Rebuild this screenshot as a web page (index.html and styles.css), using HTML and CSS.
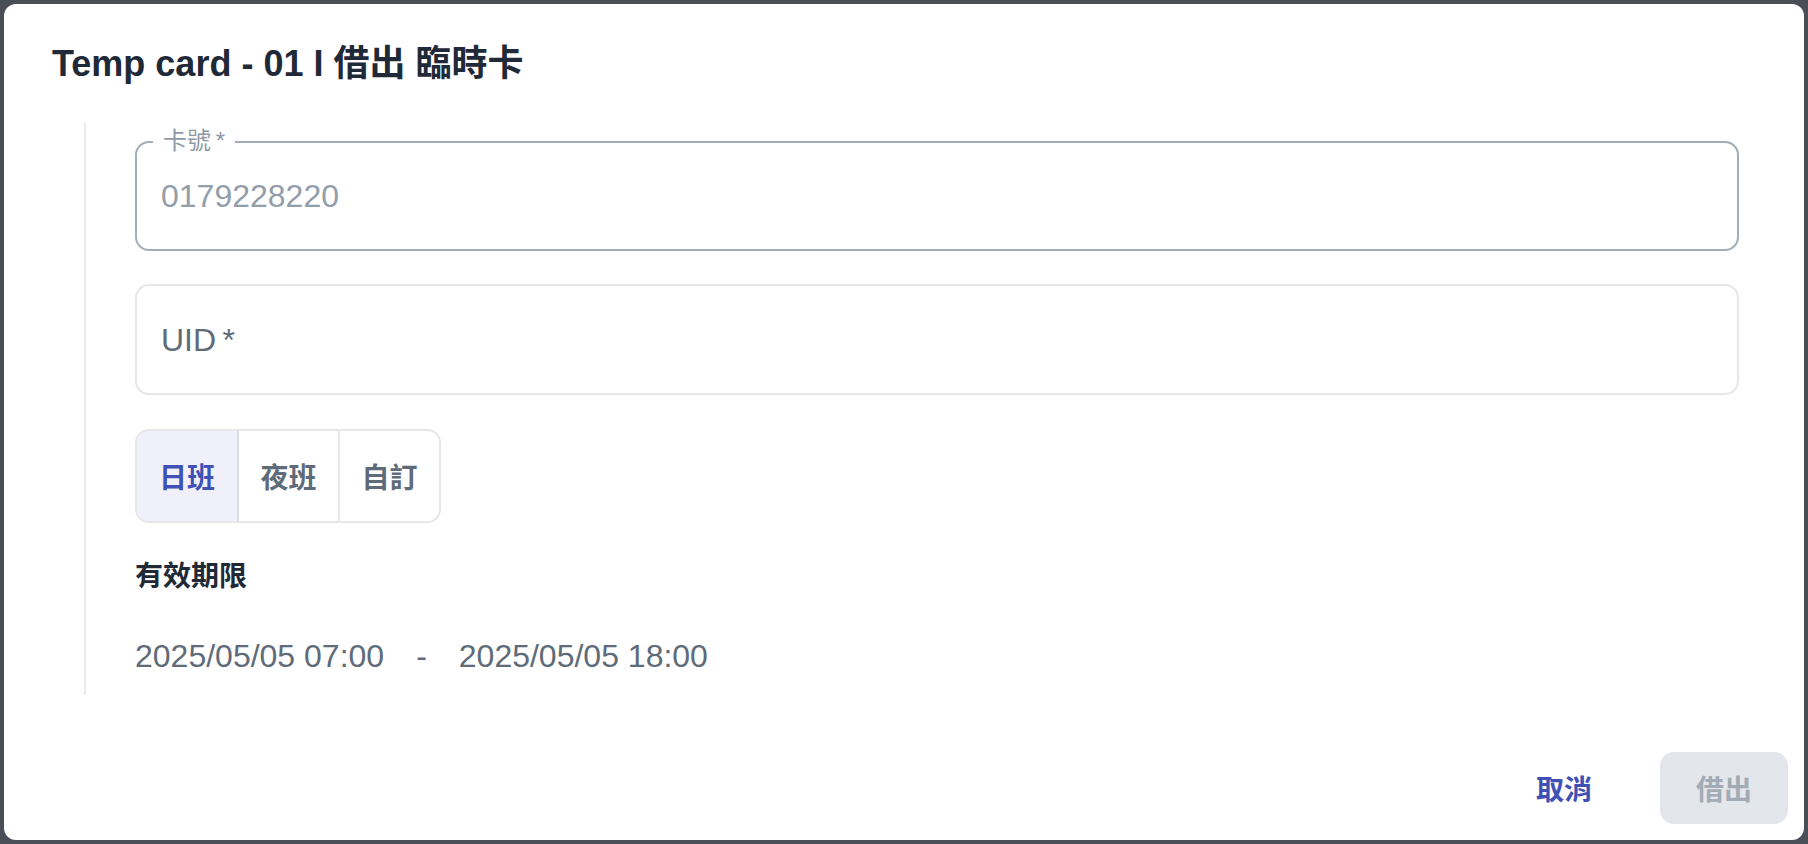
FILE: index.html
```html
<!DOCTYPE html>
<html lang="zh-Hant">
<head>
<meta charset="utf-8">
<title>Temp card</title>
<link rel="stylesheet" href="styles.css">
</head>
<body>
  <div class="dialog">
    <h2 class="title">Temp card - 01 I 借出 臨時卡</h2>
    <div class="content">
      <div class="field field-filled">
        <span class="field-label">卡號&#8201;*</span>
        <span class="field-value">0179228220</span>
      </div>
      <div class="field field-empty">
        <span class="field-placeholder">UID&#8201;*</span>
      </div>
      <div class="toggle">
        <button class="toggle-btn is-active">日班</button>
        <button class="toggle-btn">夜班</button>
        <button class="toggle-btn">自訂</button>
      </div>
      <div class="heading">有效期限</div>
      <div class="dates">
        <span>2025/05/05 07:00</span>
        <span class="dash">-</span>
        <span>2025/05/05 18:00</span>
      </div>
    </div>
    <div class="actions">
      <button class="btn btn-text">取消</button>
      <button class="btn btn-disabled">借出</button>
    </div>
  </div>
</body>
</html>
```
FILE: styles.css
```css
* { box-sizing: border-box; }

html, body {
  margin: 0;
  height: 844px;
}

body {
  background: #4a4f57;
  padding: 4px;
  font-family: "Liberation Sans", "Noto Sans CJK TC", sans-serif;
  overflow: hidden;
}

.dialog {
  background: #ffffff;
  border-radius: 12px;
  height: 836px;
  display: flex;
  flex-direction: column;
}

.title {
  margin: 36px 0 0 48px;
  font-size: 36px;
  line-height: 48px;
  font-weight: 700;
  color: #1f2937;
}

.content {
  margin: 35px 65px 0 80px;
  border-left: 2px solid #e8ebef;
  padding: 18px 0 19px 49px;
}

.field {
  position: relative;
  border-radius: 14px;
  display: flex;
  align-items: center;
  padding-left: 24px;
  font-size: 32px;
  line-height: 40px;
}

.field-filled {
  height: 110px;
  border: 2px solid #a3adb8;
}

.field-empty {
  height: 111px;
  margin-top: 33px;
  border: 2px solid #e5e7eb;
}

.field-label {
  position: absolute;
  left: 16px;
  top: -14px;
  padding: 0 10px;
  background: #ffffff;
  font-size: 24px;
  line-height: 24px;
  color: #8f99a5;
}

.field-value {
  color: #939eab;
}

.field-placeholder {
  color: #5f6b78;
}

.toggle {
  display: flex;
  width: max-content;
  margin-top: 34px;
  height: 94px;
  border: 2px solid #e5e7eb;
  border-radius: 14px;
  overflow: hidden;
}

.toggle-btn {
  width: 101px;
  border: 0;
  margin: 0;
  padding: 0;
  background: #ffffff;
  font-family: inherit;
  font-size: 28px;
  font-weight: 700;
  color: #5f6b78;
}

.toggle-btn:first-child {
  width: 100px;
}

.toggle-btn + .toggle-btn {
  border-left: 2px solid #e5e7eb;
}

.toggle-btn.is-active {
  background: #eff0fa;
  color: #3f51b5;
}

.toggle-btn.is-active + .toggle-btn {
  border-left-color: #d9dce8;
}

.heading {
  margin-top: 34px;
  font-size: 28px;
  line-height: 40px;
  font-weight: 700;
  color: #1f2937;
}

.dates {
  margin-top: 39px;
  font-size: 32px;
  line-height: 40px;
  color: #5f6b78;
  display: flex;
}

.dash {
  margin: 0 32px;
}

.actions {
  margin-top: auto;
  display: flex;
  justify-content: flex-end;
  gap: 32px;
  padding: 0 16px 16px 0;
}

.btn {
  min-width: 128px;
  height: 72px;
  border: 0;
  border-radius: 14px;
  font-family: inherit;
  font-size: 28px;
  font-weight: 700;
  padding: 0 32px;
}

.btn-text {
  background: transparent;
  color: #3f51b5;
}

.btn-disabled {
  background: #e3e6ea;
  color: #a2abb6;
}
```
